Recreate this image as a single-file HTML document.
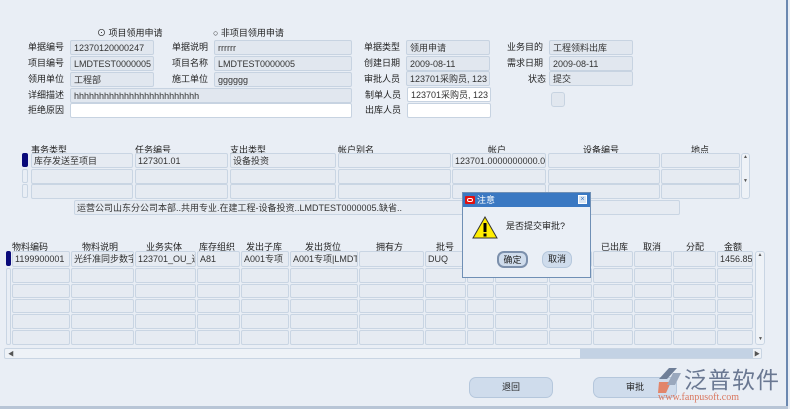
<!DOCTYPE html><html><head><meta charset="utf-8"><style>
*{margin:0;padding:0;box-sizing:border-box}
body{width:790px;height:409px;background:#e9eef5;font-family:"Liberation Sans","Noto Sans CJK SC",sans-serif;font-size:9px;color:#222;position:relative;overflow:hidden}
.a{position:absolute;white-space:nowrap}
.f{position:absolute;background:#e1e7ef;border:1px solid #c7d3e1;border-radius:2px;height:15px;padding:1px 3px;color:#333;overflow:hidden;white-space:nowrap;line-height:12px}
.w{background:#fff}
.l{position:absolute;line-height:13px;white-space:nowrap}
.c{position:absolute;background:#e6ebf2;border:1px solid #c9d5e3;border-radius:2px;overflow:hidden;white-space:nowrap;padding:1px 2px;line-height:12px;color:#333}
.h{position:absolute;white-space:nowrap;font-size:9px;color:#222}
.btn{position:absolute;background:#cfdcec;border:1px solid #b5c7dc;border-radius:7px;text-align:center;line-height:19px}
</style></head><body>
<div class="a" style="left:97px;top:26px">⊙ 项目领用申请</div>
<div class="a" style="left:213px;top:26px">○ 非项目领用申请</div>

<div class="l" style="left:28px;top:41px">单据编号</div><div class="f" style="left:70px;top:40px;width:84px">12370120000247</div>
<div class="l" style="left:28px;top:57px">项目编号</div><div class="f" style="left:70px;top:56px;width:84px">LMDTEST0000005</div>
<div class="l" style="left:28px;top:73px">领用单位</div><div class="f" style="left:70px;top:72px;width:84px">工程部</div>
<div class="l" style="left:28px;top:89px">详细描述</div><div class="f" style="left:70px;top:88px;width:282px">hhhhhhhhhhhhhhhhhhhhhhhhh</div>
<div class="l" style="left:28px;top:104px">拒绝原因</div><div class="f w" style="left:70px;top:103px;width:282px"></div>

<div class="l" style="left:172px;top:41px">单据说明</div><div class="f" style="left:214px;top:40px;width:138px">rrrrrr</div>
<div class="l" style="left:172px;top:57px">项目名称</div><div class="f" style="left:214px;top:56px;width:138px">LMDTEST0000005</div>
<div class="l" style="left:172px;top:73px">施工单位</div><div class="f" style="left:214px;top:72px;width:138px">gggggg</div>

<div class="l" style="left:364px;top:41px">单据类型</div><div class="f" style="left:406px;top:40px;width:84px">领用申请</div>
<div class="l" style="left:364px;top:57px">创建日期</div><div class="f" style="left:406px;top:56px;width:84px">2009-08-11</div>
<div class="l" style="left:364px;top:73px">审批人员</div><div class="f" style="left:406px;top:71px;width:84px">123701采购员, 123</div>
<div class="l" style="left:365px;top:89px">制单人员</div><div class="f w" style="left:407px;top:87px;width:84px">123701采购员, 123</div>
<div class="l" style="left:365px;top:104px">出库人员</div><div class="f w" style="left:407px;top:103px;width:84px"></div>

<div class="l" style="left:507px;top:41px">业务目的</div><div class="f" style="left:549px;top:40px;width:84px">工程领料出库</div>
<div class="l" style="left:507px;top:57px">需求日期</div><div class="f" style="left:549px;top:56px;width:84px">2009-08-11</div>
<div class="l" style="left:528px;top:73px">状态</div><div class="f" style="left:549px;top:71px;width:84px">提交</div>
<div class="f" style="left:551px;top:92px;width:14px;height:15px;border-radius:3px"></div>

<!-- grid1 headers -->
<div class="h" style="left:31px;top:143px">事务类型</div>
<div class="h" style="left:135px;top:143px">任务编号</div>
<div class="h" style="left:230px;top:143px">支出类型</div>
<div class="h" style="left:338px;top:143px">帐户别名</div>
<div class="h" style="left:488px;top:143px">帐户</div>
<div class="h" style="left:583px;top:143px">设备编号</div>
<div class="h" style="left:691px;top:143px">地点</div>
<div style="position:absolute;left:22px;top:153px;width:6px;height:14px;background:#0a0a7a;border-radius:2px"></div>
<div style="position:absolute;left:22px;top:169px;width:6px;height:14px;border:1px solid #c9d5e3;border-radius:2px"></div>
<div style="position:absolute;left:22px;top:184px;width:6px;height:14px;border:1px solid #c9d5e3;border-radius:2px"></div>
<div id="g1"></div>
<div style="position:absolute;left:741px;top:153px;width:9px;height:46px;border:1px solid #c9d5e3;border-radius:3px;background:#eef2f7;font-size:5px;text-align:center;color:#555">▲<br><br><br><br>▼</div>
<div class="c" style="left:74px;top:200px;width:606px;height:15px">运营公司山东分公司本部..共用专业.在建工程-设备投资..LMDTEST0000005.缺省..</div>

<!-- grid2 headers -->
<div class="h" style="left:12px;top:240px">物料编码</div>
<div class="h" style="left:82px;top:240px">物料说明</div>
<div class="h" style="left:146px;top:240px">业务实体</div>
<div class="h" style="left:199px;top:240px">库存组织</div>
<div class="h" style="left:246px;top:240px">发出子库</div>
<div class="h" style="left:305px;top:240px">发出货位</div>
<div class="h" style="left:376px;top:240px">拥有方</div>
<div class="h" style="left:436px;top:240px">批号</div>
<div class="h" style="left:601px;top:240px">已出库</div>
<div class="h" style="left:643px;top:240px">取消</div>
<div class="h" style="left:686px;top:240px">分配</div>
<div class="h" style="left:724px;top:240px">金额</div>
<div id="g2"></div>
<div style="position:absolute;left:755px;top:251px;width:10px;height:94px;border:1px solid #c9d5e3;border-radius:3px;background:#eef2f7;font-size:5px;color:#555;text-align:center">▲</div>
<div style="position:absolute;left:758px;top:336px;font-size:5px;color:#555">▼</div>
<div style="position:absolute;left:4px;top:348px;width:758px;height:11px;border:1px solid #c9d5e3;border-radius:2px;background:#eef2f7"></div>
<div style="position:absolute;left:580px;top:349px;width:173px;height:9px;background:#c3d2e4"></div>
<div style="position:absolute;left:8px;top:349px;font-size:6px;color:#555">◀</div>
<div style="position:absolute;left:754px;top:349px;font-size:6px;color:#555">▶</div>

<div class="btn" style="left:469px;top:377px;width:84px;height:21px">退回</div>
<div class="btn" style="left:593px;top:377px;width:84px;height:21px">审批</div>
<svg class="a" style="left:655px;top:365px" width="28" height="30"><path d="M4 14 L14 3 L22 3 L12 14 Z" fill="#6f7f98"/><path d="M4 17 L16 17 L11 28 L3 28 Z" fill="#e2856a"/><path d="M18 8 L26 8 L20 20 L12 20 Z" fill="#9aa8bd"/></svg>
<div class="a" style="left:684px;top:361px;font-size:23px;color:#6a7892;letter-spacing:1px">泛普软件</div>
<div class="a" style="left:658px;top:392px;font-size:10px;color:#d9775f;font-family:'Liberation Serif',serif">www.fanpusoft.com</div>

<!-- dialog -->
<div style="position:absolute;left:462px;top:192px;width:129px;height:86px;background:#eaeff6;border:1px solid #6f8fb5">
<div style="height:14px;background:#3a78c2;color:#fff;line-height:14px;padding-left:14px;font-size:9px">注意</div>
<div style="position:absolute;left:2px;top:3px;width:10px;height:8px;background:#e01010;border-radius:1px"><div style="margin:2px 2px;width:6px;height:4px;border:1px solid #fff;border-radius:2px"></div></div>
<div style="position:absolute;right:3px;top:2px;width:9px;height:9px;background:#d8e4f2;border:1px solid #fff;font-size:7px;line-height:7px;text-align:center;color:#3a78c2">×</div>
<svg style="position:absolute;left:9px;top:23px" width="26" height="24"><path d="M13 1 L25 22 L1 22 Z" fill="#ffee00" stroke="#333" stroke-width="1"/><rect x="11.5" y="7" width="3" height="9" fill="#000"/><rect x="11.5" y="17.5" width="3" height="3" fill="#000"/></svg>
<div class="a" style="left:43px;top:26px">是否提交审批?</div>
<div class="btn" style="left:34px;top:58px;width:31px;height:17px;line-height:15px;border:2px solid #7c90ac">确定</div>
<div class="btn" style="left:79px;top:58px;width:30px;height:17px;line-height:15px">取消</div>
</div>

<div style="position:absolute;left:786px;top:0;width:2px;height:409px;background:#6b88b0"></div>
<div style="position:absolute;left:0;top:406px;width:788px;height:3px;background:#b8c5d6"></div>
<script>
function grid(id,cols,rows,data){var h='';rows.forEach(function(r,ri){cols.forEach(function(c,ci){var t=(ri==0&&data[ci])||'';h+='<div class="c" style="left:'+c[0]+'px;top:'+r[0]+'px;width:'+(c[1]-c[0])+'px;height:'+(r[1]-r[0])+'px">'+t+'</div>'})});document.getElementById(id).outerHTML=h;}
grid('g1',[[31,133],[135,228],[230,336],[338,451],[452,546],[548,660],[661,740]],[[153,168],[169,184],[184,199]],['库存发送至项目','127301.01','设备投资','','123701.0000000000.0']);
var r2=[[251,267],[268,283],[284,298],[299,313],[314,329],[330,345]];
grid('g2',[[12,70],[71,134],[135,196],[197,240],[241,289],[290,358],[359,424],[425,466],[467,494],[495,548],[549,592],[593,633],[634,672],[673,716],[717,753]],r2,['1199900001','光纤准同步数字','123701_OU_通','A81','A001专项','A001专项|LMDT','','DUQ','','','','','','','1456.85']);
</script>
<div style="position:absolute;left:6px;top:251px;width:5px;height:15px;background:#0a0a7a;border-radius:2px"></div>
<div style="position:absolute;left:6px;top:268px;width:5px;height:77px;border:1px solid #c9d5e3;border-radius:2px"></div>
</body></html>
